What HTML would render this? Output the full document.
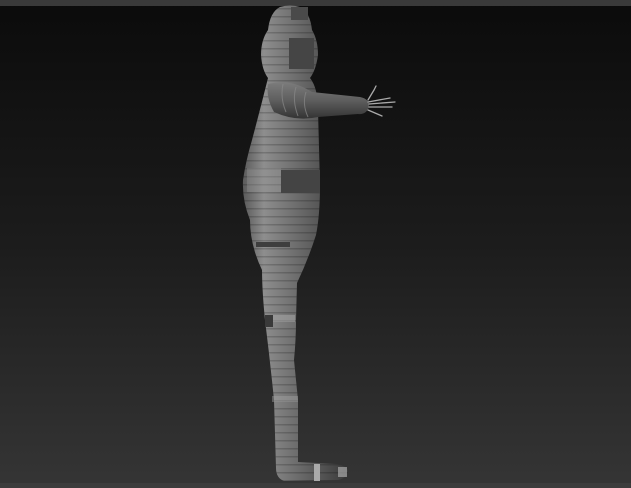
<!DOCTYPE html>
<html><head><style>
html,body{margin:0;padding:0;width:631px;height:488px;overflow:hidden;background:#1a1a1a}
svg{display:block}
</style></head><body>
<svg width="631" height="488" viewBox="0 0 631 488" xmlns="http://www.w3.org/2000/svg">
<defs>
<linearGradient id="bg" x1="0" y1="0" x2="0" y2="1">
<stop offset="0" stop-color="#0b0b0b"/><stop offset="0.5" stop-color="#1c1c1c"/><stop offset="1" stop-color="#353535"/>
</linearGradient>
<linearGradient id="body" x1="0" y1="0" x2="1" y2="0">
<stop offset="0" stop-color="#5a5a5a"/><stop offset="0.2" stop-color="#8e8e8e"/><stop offset="0.5" stop-color="#6e6e6e"/><stop offset="1" stop-color="#3a3a3a"/>
</linearGradient>
<linearGradient id="arm" x1="0" y1="0" x2="0" y2="1">
<stop offset="0" stop-color="#7c7c7c"/><stop offset="0.5" stop-color="#5e5e5e"/><stop offset="1" stop-color="#333"/>
</linearGradient>
<pattern id="stripes" width="10" height="8" patternUnits="userSpaceOnUse">
<rect width="10" height="1.5" fill="#000" opacity="0.18"/>
</pattern>
</defs>
<rect width="631" height="488" fill="url(#bg)"/>
<rect width="631" height="6" fill="#3a3a3a"/>
<rect y="483" width="631" height="5" fill="#3c3c3c"/>
<path d="M280 7 Q290 4 300 7 Q310 12 312 30 Q318 40 318 55 Q316 70 310 78 Q318 88 318 110 L320 185 Q320 215 316 235 Q308 260 297 283 L296 320 Q296 340 294 360 L298 400 L298 462 L336 464 Q348 466 348 472 Q347 478 338 480 L284 481 Q276 478 276 468 L274 400 Q270 360 265 320 Q262 290 262 270 Q250 245 250 220 Q242 200 243 180 Q246 160 252 140 Q260 110 268 78 Q262 70 261 55 Q261 40 268 30 Q270 12 280 7 Z" fill="url(#body)"/>
<path d="M280 7 Q290 4 300 7 Q310 12 312 30 Q318 40 318 55 Q316 70 310 78 Q318 88 318 110 L320 185 Q320 215 316 235 Q308 260 297 283 L296 320 Q296 340 294 360 L298 400 L298 462 L336 464 Q348 466 348 472 Q347 478 338 480 L284 481 Q276 478 276 468 L274 400 Q270 360 265 320 Q262 290 262 270 Q250 245 250 220 Q242 200 243 180 Q246 160 252 140 Q260 110 268 78 Q262 70 261 55 Q261 40 268 30 Q270 12 280 7 Z" fill="url(#stripes)"/>
<rect x="291" y="7" width="17" height="13" fill="#4a4a4a"/>
<rect x="289" y="38" width="25" height="31" fill="#454545"/>
<rect x="281" y="170" width="39" height="23" fill="#444"/>
<rect x="247" y="168" width="34" height="24" fill="#999" opacity="0.35"/>
<rect x="256" y="242" width="34" height="5" fill="#3e3e3e"/>
<rect x="265" y="315" width="8" height="12" fill="#3a3a3a"/>
<rect x="273" y="315" width="22" height="7" fill="#aaa" opacity="0.5"/>
<rect x="272" y="396" width="26" height="6" fill="#aaa" opacity="0.4"/>
<rect x="314" y="464" width="6" height="17" fill="#aaa"/>
<rect x="338" y="467" width="9" height="10" fill="#bbb" opacity="0.6"/>
<path d="M268 84 Q290 78 312 92 L360 97 Q370 99 369 107 Q366 115 358 114 L318 117 Q296 122 274 112 Q266 98 268 84 Z" fill="url(#arm)"/>
<g stroke="#8a8a8a" stroke-width="1" fill="none" opacity="0.7">
<path d="M283 84 Q280 98 286 112"/><path d="M296 87 Q292 100 298 116"/><path d="M306 92 Q302 104 308 117"/>
</g>
<g stroke="#aaa" stroke-width="1.3" fill="none" stroke-linecap="round">
<path d="M368 100 L374 90 L376 86"/><path d="M368 102 L390 98"/><path d="M369 104 L395 102"/><path d="M369 107 L392 107"/><path d="M368 110 L382 116"/>
</g>
</svg>
</body></html>
